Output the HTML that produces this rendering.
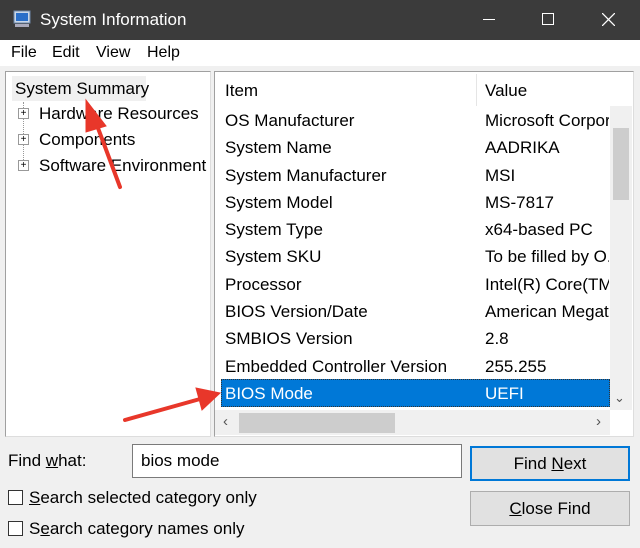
<!DOCTYPE html>
<html><head><style>
*{margin:0;padding:0;box-sizing:border-box}
body{width:640px;height:548px;overflow:hidden;background:#f0f0f0;font-family:"Liberation Sans",sans-serif;font-size:17px;color:#000;position:relative}
.a{position:absolute;white-space:nowrap}
</style></head><body>
<div class="a" style="left:0;top:0;width:640px;height:40px;background:#3b3b3b"></div>
<svg class="a" style="left:12px;top:9px" width="20" height="20"><rect x="2" y="2" width="16" height="12" fill="#c9d7e8" stroke="#6d87a8"/><rect x="4" y="4" width="12" height="8" fill="#2a6fc9"/><rect x="3" y="15" width="14" height="3" fill="#aab"/></svg>
<div class="a" style="left:40px;top:10px;color:#fff;font-size:17px">System Information</div>
<div class="a" style="left:483px;top:19px;width:12px;height:1px;background:#fff"></div>
<div class="a" style="left:542px;top:13px;width:12px;height:12px;border:1px solid #fff"></div>
<svg class="a" style="left:602px;top:13px" width="13" height="13"><path d="M0 0L13 13M13 0L0 13" stroke="#fff" stroke-width="1.3"/></svg>
<div class="a" style="left:0;top:40px;width:640px;height:26px;background:#fff"></div>
<div class="a" style="left:11px;top:44px;font-size:16px">File</div>
<div class="a" style="left:52px;top:44px;font-size:16px">Edit</div>
<div class="a" style="left:96px;top:44px;font-size:16px">View</div>
<div class="a" style="left:147px;top:44px;font-size:16px">Help</div>
<div class="a" style="left:5px;top:71px;width:206px;height:366px;background:#fff;border:1px solid #a0a0a0;border-right-color:#ddd;border-bottom-color:#ddd"></div>
<div class="a" style="left:12px;top:76px;width:134px;height:25px;background:#f0f0f0"></div>
<div class="a" style="left:15px;top:79px">System Summary</div>
<div class="a" style="left:23px;top:102px;height:64px;border-left:1px dotted #999"></div>
<div class="a" style="left:39px;top:104px">Hardware Resources</div>
<div class="a" style="left:39px;top:130px">Components</div>
<div class="a" style="left:39px;top:156px">Software Environment</div>
<div class="a" style="left:18px;top:108px;width:11px;height:11px;border:1px solid #999;background:#fff;font-size:10px;line-height:9px;text-align:center">+</div>
<div class="a" style="left:18px;top:134px;width:11px;height:11px;border:1px solid #999;background:#fff;font-size:10px;line-height:9px;text-align:center">+</div>
<div class="a" style="left:18px;top:160px;width:11px;height:11px;border:1px solid #999;background:#fff;font-size:10px;line-height:9px;text-align:center">+</div>
<div class="a" style="left:214px;top:71px;width:420px;height:366px;background:#fff;border:1px solid #a0a0a0;border-right-color:#ddd;border-bottom-color:#ddd"></div>
<div class="a" style="left:476px;top:74px;width:1px;height:32px;background:#e5e5e5"></div>
<div class="a" style="left:225px;top:81px">Item</div>
<div class="a" style="left:485px;top:81px">Value</div>
<div class="a" style="left:221px;top:379px;width:389px;height:28px;background:#0078d7;border:1px dotted #333"></div>
<div class="a" style="left:225px;top:107px;line-height:27.3px">OS Manufacturer<br>System Name<br>System Manufacturer<br>System Model<br>System Type<br>System SKU<br>Processor<br>BIOS Version/Date<br>SMBIOS Version<br>Embedded Controller Version<br><span style="color:#fff">BIOS Mode</span></div>
<div class="a" style="left:485px;top:107px;line-height:27.3px;width:124px;overflow:hidden">Microsoft Corporation<br>AADRIKA<br>MSI<br>MS-7817<br>x64-based PC<br>To be filled by O.E.M.<br>Intel(R) Core(TM)<br>American Megatrends<br>2.8<br>255.255<br><span style="color:#fff">UEFI</span></div>
<div class="a" style="left:610px;top:106px;width:22px;height:304px;background:#f0f0f0"></div>
<div class="a" style="left:613px;top:128px;width:16px;height:72px;background:#cdcdcd"></div>
<div class="a" style="left:614px;top:390px;font-size:13px;color:#555">&#8964;</div>
<div class="a" style="left:215px;top:410px;width:395px;height:25px;background:#f0f0f0"></div>
<div class="a" style="left:239px;top:413px;width:156px;height:20px;background:#cdcdcd"></div>
<div class="a" style="left:223px;top:413px;font-size:15px;color:#555">&lsaquo;</div>
<div class="a" style="left:596px;top:413px;font-size:15px;color:#555">&rsaquo;</div>
<div class="a" style="left:8px;top:451px">Find <u>w</u>hat:</div>
<div class="a" style="left:132px;top:444px;width:330px;height:34px;background:#fff;border:1px solid #7a7a7a"></div>
<div class="a" style="left:141px;top:451px">bios mode</div>
<div class="a" style="left:470px;top:446px;width:160px;height:35px;background:#e1e1e1;border:2px solid #0078d7;text-align:center;line-height:31px">Find <u>N</u>ext</div>
<div class="a" style="left:470px;top:491px;width:160px;height:35px;background:#e1e1e1;border:1px solid #adadad;text-align:center;line-height:33px"><u>C</u>lose Find</div>
<div class="a" style="left:8px;top:490px;width:15px;height:15px;border:1px solid #333;background:#fff"></div>
<div class="a" style="left:29px;top:488px"><u>S</u>earch selected category only</div>
<div class="a" style="left:8px;top:521px;width:15px;height:15px;border:1px solid #333;background:#fff"></div>
<div class="a" style="left:29px;top:519px">S<u>e</u>arch category names only</div>
<svg class="a" style="left:0;top:0" width="640" height="548"><g fill="#e8372a" stroke="#e8372a" stroke-width="4" stroke-linecap="round"><line x1="120" y1="187" x2="95" y2="120"/><polygon points="86,100 106,126 86,132" stroke-width="1"/><line x1="125" y1="420" x2="200" y2="399"/><polygon points="220,393 196,388 202,410" stroke-width="1"/></g></svg>
</body></html>
